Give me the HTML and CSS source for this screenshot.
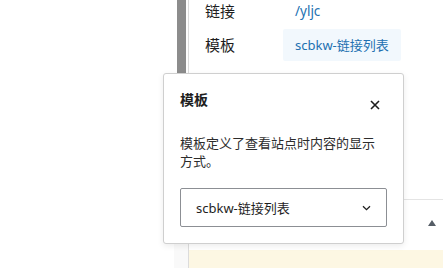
FILE: index.html
```html
<!DOCTYPE html>
<html lang="zh">
<head>
<meta charset="utf-8">
<title>模板</title>
<link rel="stylesheet" href="styles.css">
</head>
<body>
<div class="page">
  <div class="blank"></div>
  <div class="rail">
    <div class="rail-bar"></div>
    <div class="rail-low"></div>
  </div>
  <div class="divider"></div>
  <div class="panel">
    <div class="props">
      <div class="row row-first">
        <span class="label">链接</span>
        <span class="value link">/yljc</span>
      </div>
      <div class="row">
        <span class="label">模板</span>
        <span class="badge">scbkw-链接列表</span>
      </div>
    </div>
    <div class="section-head">
      <span class="tri"></span>
    </div>
    <div class="notice"></div>
  </div>

  <div class="popover">
    <div class="pop-title">模板</div>
    <button class="pop-close" aria-label="关闭">
      <svg width="10" height="10" viewBox="0 0 10 10"><path d="M1 1L9 9M9 1L1 9" stroke="#1e1e1e" stroke-width="1.6" fill="none"/></svg>
    </button>
    <p class="pop-desc">模板定义了查看站点时内容的显示方式。</p>
    <div class="select">
      <span class="select-text">scbkw-链接列表</span>
      <svg class="chev" width="9" height="6" viewBox="0 0 9 6"><path d="M1 1.2L4.5 4.6L8 1.2" stroke="#1e1e1e" stroke-width="1.3" fill="none"/></svg>
    </div>
  </div>
</div>
</body>
</html>
```
FILE: styles.css
```css
html, body {
  margin: 0;
  padding: 0;
  background: #fff;
}
body {
  width: 443px;
  height: 268px;
  overflow: hidden;
  font-family: "Noto Sans", "Noto Sans CJK SC", sans-serif;
  color: #1e1e1e;
}
.page {
  position: relative;
  display: flex;
  width: 443px;
  height: 268px;
}
.blank {
  width: 174px;
  flex: none;
}
.rail {
  width: 14px;
  flex: none;
  display: flex;
  flex-direction: column;
}
.rail-bar {
  height: 243px;
  width: 9px;
  margin-left: 3px;
  background: #8c8c8c;
}
.rail-low {
  flex: 1;
  background: #f9f9f9;
}
.divider {
  width: 1px;
  flex: none;
  background: #dcdcdc;
}
.panel {
  flex: 1;
  display: flex;
  flex-direction: column;
}
.props {
  height: 200px;
  border-bottom: 1px solid #e4e4e4;
  padding-left: 16px;
  box-sizing: border-box;
}
.row {
  display: flex;
  align-items: center;
  margin-top: 7px;
}
.row-first {
  margin-top: 0;
  height: 22px;
}
.label {
  width: 78px;
  font-size: 15px;
  line-height: 22px;
  color: #1e1e1e;
}
.value {
  font-size: 13.5px;
  padding-left: 12px;
}
.link {
  color: #2271b1;
}
.badge {
  height: 32px;
  line-height: 32px;
  padding: 0 12px;
  font-size: 13px;
  color: #2271b1;
  background: #f2f8fd;
  border-radius: 2px;
}
.section-head {
  height: 50px;
  display: flex;
  justify-content: flex-end;
  align-items: center;
  padding-right: 7px;
}
.tri {
  width: 0;
  height: 0;
  border-left: 4px solid transparent;
  border-right: 4px solid transparent;
  border-bottom: 6px solid #555d66;
  margin-top: -4px;
}
.notice {
  flex: 1;
  background: #fdf7e3;
}
.popover {
  position: absolute;
  left: 163px;
  top: 73px;
  width: 241px;
  box-sizing: border-box;
  padding: 16px;
  background: #fff;
  border: 1px solid #cfcfcf;
  border-radius: 3px;
  box-shadow: 0 2px 6px rgba(0,0,0,0.08);
}
.pop-title {
  font-size: 14px;
  font-weight: 700;
  line-height: 20px;
}
.pop-close {
  position: absolute;
  top: 25px;
  right: 22px;
  width: 12px;
  height: 12px;
  padding: 1px;
  margin: 0;
  border: 0;
  background: none;
  display: flex;
  align-items: center;
  justify-content: center;
}
.pop-desc {
  margin: 24px 0 0;
  font-size: 13px;
  line-height: 18px;
  color: #2c2c2c;
}
.select {
  margin-top: 18px;
  height: 39px;
  box-sizing: border-box;
  border: 1px solid #8c8f94;
  border-radius: 2px;
  display: flex;
  align-items: center;
  justify-content: space-between;
  padding: 0 15px 0 15px;
}
.select-text {
  font-size: 13px;
}
.chev {
  display: block;
}
```
